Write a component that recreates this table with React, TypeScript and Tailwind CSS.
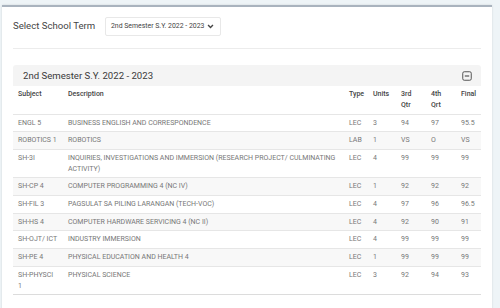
import { Fragment } from 'react';

interface Grade {
  subject: string;
  description: string;
  type: string;
  units: string;
  third: string;
  fourth: string;
  final: string;
}

const grades: Grade[] = [
  { subject: 'ENGL 5', description: 'BUSINESS ENGLISH AND CORRESPONDENCE', type: 'LEC', units: '3', third: '94', fourth: '97', final: '95.5' },
  { subject: 'ROBOTICS 1', description: 'ROBOTICS', type: 'LAB', units: '1', third: 'VS', fourth: 'O', final: 'VS' },
  { subject: 'SH-3I', description: 'INQUIRIES, INVESTIGATIONS AND IMMERSION (RESEARCH PROJECT/ CULMINATING ACTIVITY)', type: 'LEC', units: '4', third: '99', fourth: '99', final: '99' },
  { subject: 'SH-CP 4', description: 'COMPUTER PROGRAMMING 4 (NC IV)', type: 'LEC', units: '1', third: '92', fourth: '92', final: '92' },
  { subject: 'SH-FIL 3', description: 'PAGSULAT SA PILING LARANGAN (TECH-VOC)', type: 'LEC', units: '4', third: '97', fourth: '96', final: '96.5' },
  { subject: 'SH-HS 4', description: 'COMPUTER HARDWARE SERVICING 4 (NC II)', type: 'LEC', units: '4', third: '92', fourth: '90', final: '91' },
  { subject: 'SH-OJT/ ICT', description: 'INDUSTRY IMMERSION', type: 'LEC', units: '4', third: '99', fourth: '99', final: '99' },
  { subject: 'SH-PE 4', description: 'PHYSICAL EDUCATION AND HEALTH 4', type: 'LEC', units: '1', third: '99', fourth: '99', final: '99' },
  { subject: 'SH-PHYSCI 1', description: 'PHYSICAL SCIENCE', type: 'LEC', units: '3', third: '92', fourth: '94', final: '93' },
];

export default function App() {
  return (
    <div className="w-[500px] h-[308px] overflow-hidden bg-[#eef4f7] pt-[5px] pl-[2px] pr-[8px] font-['Roboto',sans-serif]">
      <div className="bg-white border-t-2 border-[#a9b3be] shadow-[0_0_2px_rgba(0,0,0,0.12)] h-[400px] px-[11px] pt-[10px]">
        {/* Term selector */}
        <div className="flex items-center h-[19px]">
          <span className="text-[9.6px] text-[#444] w-[92px] shrink-0">Select School Term</span>
          <div className="flex items-center h-[19px] w-[116px] border border-[#e8e8e8] rounded-[2px] pl-[5px] pr-[6px]">
            <span className="text-[6.9px] text-[#444] flex-1">2nd Semester S.Y. 2022 - 2023</span>
            <svg width="7" height="5" viewBox="0 0 10 7">
              <path d="M1.5 1.5 L5 5 L8.5 1.5" fill="none" stroke="#444" strokeWidth="2" />
            </svg>
          </div>
        </div>
        <div className="h-px bg-[#ececec] mt-[12px] mb-[16px]" />

        {/* Term grades */}
        <div className="w-[468px]">
          <div className="flex items-center justify-between h-[21px] bg-[#f4f4f4] rounded-t-[3px] pl-[10px] pr-[9px] pt-px">
            <span className="text-[9.6px] text-[#3a3a3a]">2nd Semester S.Y. 2022 - 2023</span>
            <svg width="10" height="10" viewBox="0 0 10 10">
              <rect x="0.75" y="0.75" width="8.5" height="8.5" rx="1.5" fill="none" stroke="#555" strokeWidth="1" />
              <path d="M2.8 5 H7.2" stroke="#555" strokeWidth="1.2" />
            </svg>
          </div>
          <table className="w-[468px] table-fixed border-collapse text-[7px] leading-[10.7px]">
            <colgroup>
              <col className="w-[50px]" />
              <col className="w-[281px]" />
              <col className="w-[24px]" />
              <col className="w-[28px]" />
              <col className="w-[30px]" />
              <col className="w-[30px]" />
              <col className="w-[25px]" />
            </colgroup>
            <thead>
              <tr className="text-[#444] text-left align-top">
                <th className="px-[5px] pt-[3px] pb-[3px] leading-[11px] h-[28px] font-medium">Subject</th>
                <th className="px-[5px] pt-[3px] leading-[11px] font-medium">Description</th>
                <th className="px-[5px] pt-[3px] leading-[11px] font-medium">Type</th>
                <th className="px-[5px] pt-[3px] leading-[11px] font-medium">Units</th>
                <th className="px-[5px] pt-[3px] leading-[11px] font-medium">3rd<br />Qtr</th>
                <th className="px-[5px] pt-[3px] leading-[11px] font-medium">4th<br />Qrt</th>
                <th className="px-[5px] pt-[3px] leading-[11px] font-medium">Final</th>
              </tr>
            </thead>
            <tbody className="text-[#777]">
              {grades.map((g, i) => (
                <Fragment key={g.subject}>
                  <tr className={`border-t border-[#e6e6e6] align-top ${i % 2 === 1 ? 'bg-[#f8f8f8]' : ''}`}>
                    <td className="px-[5px] py-[3px]">{g.subject}</td>
                    <td className="px-[5px] py-[3px]">{g.description}</td>
                    <td className="px-[5px] py-[3px]">{g.type}</td>
                    <td className="px-[5px] py-[3px]">{g.units}</td>
                    <td className="px-[5px] py-[3px]">{g.third}</td>
                    <td className="px-[5px] py-[3px]">{g.fourth}</td>
                    <td className="px-[5px] py-[3px]">{g.final}</td>
                  </tr>
                </Fragment>
              ))}
              <tr className="border-t border-[#dcdcdc]">
                <td colSpan={7} className="h-0 p-0" />
              </tr>
            </tbody>
          </table>
        </div>
      </div>
    </div>
  );
}
